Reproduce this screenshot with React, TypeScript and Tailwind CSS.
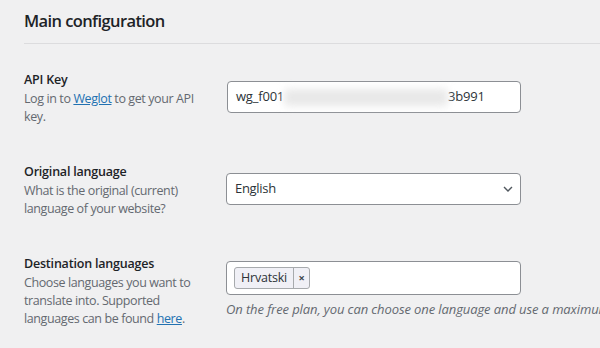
import React from "react";

export default function App() {
  const font = { fontFamily: '"Open Sans", "Noto Sans", sans-serif' };
  return (
    <div
      className="w-[600px] h-[348px] overflow-hidden bg-[#f0f0f1] text-[#1d2327]"
      style={font}
    >
      <div className="pl-[24px]">
        <h2 className="pt-[9px] h-[43px] text-[16.5px] tracking-[-0.6px] font-semibold leading-[24px] text-[#1d2327]">
          Main configuration
        </h2>
        <div className="h-px bg-[#dcdcde]" />

        {/* API Key */}
        <div className="flex pt-[26px] h-[112px]">
          <div className="w-[203px] shrink-0">
            <div className="text-[12.5px] tracking-[-0.2px] font-semibold leading-[20px]">API Key</div>
            <p className="text-[12.5px] tracking-[-0.4px] leading-[18px] text-[#646970] pr-[20px] mt-[0px]">
              Log in to{" "}
              <a className="text-[#2271b1] underline">Weglot</a> to get your API
              key.
            </p>
          </div>
          <div className="pt-[11px]">
            <div className="w-[294px] h-[32px] border border-[#8c8f94] rounded-[4px] bg-white flex items-center px-[8px] text-[13px] tracking-[-0.2px] text-[#2c3338]">
              <span>wg_f001</span>
              <span className="inline-block w-[164px] h-[17px] blur-[4px] bg-[#e8e8e8] rounded-sm" />
              <span>3b991</span>
            </div>
          </div>
        </div>

        {/* Original language */}
        <div className="flex pt-[6px] h-[92px]">
          <div className="w-[202px] shrink-0">
            <div className="text-[12.5px] tracking-[-0.2px] font-semibold leading-[20px]">Original language</div>
            <p className="text-[12.5px] tracking-[-0.4px] leading-[18px] text-[#646970] pr-[20px] mt-[0px]">
              What is the original (current) language of your website?
            </p>
          </div>
          <div className="pt-[11px]">
            <div className="w-[295px] h-[32px] border border-[#8c8f94] rounded-[4px] bg-white flex items-center justify-between pl-[8px] pr-[7px] text-[13px] tracking-[-0.3px] text-[#2c3338]">
              <span>English</span>
              <svg width="10" height="6" viewBox="0 0 10 6" fill="none">
                <path d="M1 1l4 4 4-4" stroke="#50575e" strokeWidth="1.4" />
              </svg>
            </div>
          </div>
        </div>

        {/* Destination languages */}
        <div className="flex pt-[6px]">
          <div className="w-[202px] shrink-0">
            <div className="text-[12.5px] tracking-[-0.2px] font-semibold leading-[20px]">Destination languages</div>
            <p className="text-[12.5px] tracking-[-0.4px] leading-[18px] text-[#646970] pr-[14px] mt-[0px]">
              Choose languages you want to translate into. Supported languages can be found{" "}
              <a className="text-[#2271b1] underline">here</a>.
            </p>
          </div>
          <div className="pt-[7px]">
            <div className="w-[295px] h-[34px] border border-[#8c8f94] rounded-[4px] bg-white flex items-center px-[7px]">
              <div className="flex h-[22px] border border-[#a7aaad] rounded-[3px] bg-[#f0f0f6] text-[12.5px] tracking-[-0.2px] text-[#2c3338]">
                <span className="px-[6px] leading-[20px]">Hrvatski</span>
                <span className="w-[16px] border-l border-[#a7aaad] flex items-center justify-center text-[11px] leading-[20px] font-bold text-[#3c434a]">
                  ×
                </span>
              </div>
            </div>
            <p className="mt-[5px] whitespace-nowrap italic text-[13px] tracking-[-0.1px] leading-[18px] text-[#646970]">
              On the free plan, you can choose one language and use a maximum of 2,000 words.
            </p>
          </div>
        </div>
      </div>
    </div>
  );
}
